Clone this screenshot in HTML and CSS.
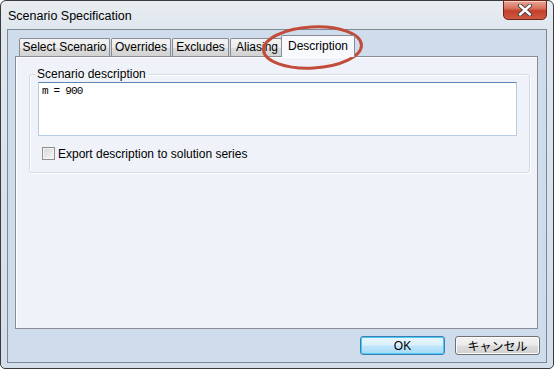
FILE: index.html
```html
<!DOCTYPE html>
<html lang="en">
<head>
  <meta charset="UTF-8">
  <title>Scenario Specification</title>
  <link rel="stylesheet" href="styles.css">
</head>
<body>

  <div class="window">
    <div class="titlebar">
      <span class="title">Scenario Specification</span>
      <button class="close-btn" title="Close">
        <svg width="16" height="12" viewBox="0 0 16 12">
          <path d="M3 1.5 L13 10.5 M13 1.5 L3 10.5" stroke="#3a3a3a" stroke-width="4.2" stroke-linecap="round"/>
          <path d="M3 1.5 L13 10.5 M13 1.5 L3 10.5" stroke="#fff" stroke-width="2.4" stroke-linecap="round"/>
        </svg>
      </button>
    </div>

    <div class="client">
      <div class="tabs">
        <div class="tab-strip">
          <div class="tab tab-select">Select Scenario</div>
          <div class="tab tab-overrides">Overrides</div>
          <div class="tab tab-excludes">Excludes</div>
          <div class="tab tab-aliasing">Aliasing</div>
          <div class="tab active">Description</div>
        </div>
        <div class="tab-panel">
          <fieldset class="group">
            <legend>Scenario description</legend>
            <textarea class="desc">m = 900</textarea>
            <label class="check">
              <span class="box"></span>
              Export description to solution series
            </label>
          </fieldset>
        </div>
      </div>

      <div class="buttons">
        <button class="btn default">OK</button>
        <button class="btn">キャンセル</button>
      </div>
    </div>

    <!-- red marker drawn over the Description tab -->
    <svg class="marker" width="112" height="54" viewBox="0 0 112 54">
      <ellipse cx="53.5" cy="24.5" rx="49" ry="20.5" fill="none" stroke="#c24c3b" stroke-width="3" transform="rotate(-3 53.5 24.5)"/>
    </svg>
  </div>

</body>
</html>
```

FILE: styles.css
```css
body {
  margin: 0;
  background: #fff;
  font-family: "Liberation Sans", Arial, sans-serif;
  font-size: 12px;
  color: #000;
}

.window {
  position: relative;
  box-sizing: border-box;
  width: 554px;
  height: 369px;
  border: 1px solid #3b3b3b;
  border-radius: 6px 6px 5px 5px;
  background: linear-gradient(#e9edf1, #dfe6ee 30px, #d3deea);
  padding: 0 6px 5px 6px;
  display: flex;
  flex-direction: column;
}

.titlebar {
  height: 28px;
  display: flex;
  align-items: center;
  padding-left: 1px;
}

.title {
  font-size: 12.5px;
  padding-top: 1px;
}

.close-btn {
  position: absolute;
  top: -1px;
  right: 6px;
  width: 44px;
  height: 20px;
  padding: 0;
  border: 1px solid #6b2419;
  border-radius: 0 0 5px 5px;
  background: linear-gradient(#eaa596, #d9735f 40%, #c2402b 55%, #cf5a41);
  box-shadow: inset 0 1px 0 rgba(255,255,255,0.5);
  display: flex;
  align-items: center;
  justify-content: center;
}

/* client area */
.client {
  flex: 1;
  border: 1px solid #7d8896;
  background: #cfdcec;
  padding: 5px 6px 7px 7px;
  display: flex;
  flex-direction: column;
}

.tabs {
  flex: 1;
  display: flex;
  flex-direction: column;
  margin-right: 2px;
}

.tab-strip {
  height: 21px;
  display: flex;
  align-items: flex-end;
  padding-left: 4px;
}

.tab {
  box-sizing: border-box;
  height: 18px;
  line-height: 17px;
  border: 1px solid #898c95;
  border-bottom: none;
  background: linear-gradient(#f3f3f3, #ebebeb 50%, #dedede 50%, #d2d2d2);
  text-align: center;
  white-space: nowrap;
  overflow: hidden;
  margin-right: 1px;
  border-radius: 2px 2px 0 0;
}

.tab-select { width: 91px; }
.tab-overrides { width: 60px; }
.tab-excludes { width: 57px; }
.tab-aliasing { width: 52px; text-align: left; padding-left: 5px; }

.tab.active {
  position: relative;
  z-index: 1;
  width: 74px;
  height: 22px;
  line-height: 20px;
  margin-left: -2px;
  margin-bottom: -1px;
  background: #f7f9fc;
}

.tab-panel {
  flex: 1;
  border: 1px solid #898c95;
  background: #eff3f9;
  box-shadow: inset 1px 1px 0 #fff;
  padding: 10px 7px 0 13px;
}

/* group box */
.group {
  margin: 0;
  padding: 1px 11px 12px 8px;
  border: 1px solid #d3dce5;
  border-radius: 3px;
  box-shadow: 1px 1px 0 #fff, inset 1px 1px 0 #fff;
}

.group legend {
  padding: 0 2px;
  margin-left: -3px;
  line-height: 14px;
}

.desc {
  display: block;
  box-sizing: border-box;
  width: 479px;
  height: 54px;
  margin: 0;
  padding: 2px 3px;
  border: 1px solid #b6cde4;
  border-top-color: #5b88b4;
  resize: none;
  font-family: "Liberation Mono", "Courier New", monospace;
  font-size: 11px;
  line-height: 13px;
  letter-spacing: -0.8px;
  color: #000;
  background: #fff;
}

.check {
  display: flex;
  align-items: center;
  margin: 11px 0 0 4px;
  height: 13px;
}

.box {
  box-sizing: border-box;
  width: 13px;
  height: 13px;
  margin-right: 3px;
  border: 1px solid #8e8f8f;
  background: linear-gradient(135deg, #d6d6d6, #f7f7f7);
  box-shadow: inset 0 0 0 1px #f4f4f4;
}

/* dialog buttons */
.buttons {
  margin-top: 7px;
  display: flex;
  justify-content: flex-end;
  gap: 10px;
}

.btn {
  box-sizing: border-box;
  width: 85px;
  height: 19px;
  padding: 0;
  border: 1px solid #707070;
  border-radius: 3px;
  background: linear-gradient(#f2f2f2, #ebebeb 48%, #dddddd 52%, #cfcfcf);
  box-shadow: inset 0 0 0 1px #fcfcfc;
  font-family: "Liberation Sans", "Noto Sans CJK JP", sans-serif;
  font-size: 12px;
  color: #000;
}

.btn.default {
  border-color: #3c7fb1;
  background: linear-gradient(#eaf6fd, #d9f0fc 48%, #bee6fd 52%, #a7d9f5);
  box-shadow: inset 0 0 0 1px #48c8f4;
}

.marker {
  position: absolute;
  left: 258px;
  top: 22px;
}
```
